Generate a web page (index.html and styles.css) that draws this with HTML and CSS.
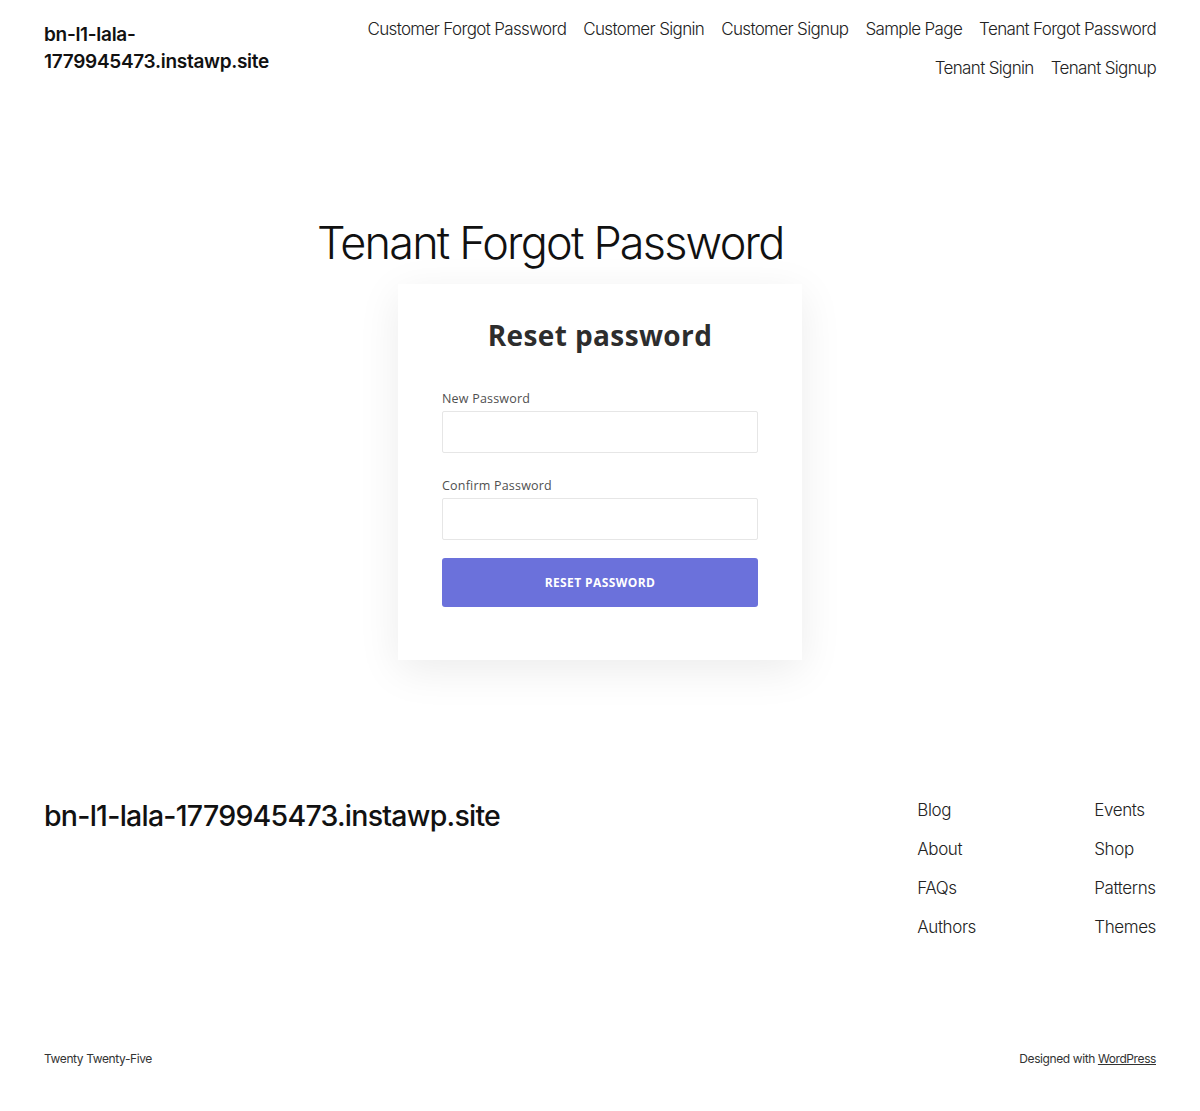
FILE: index.html
```html
<!DOCTYPE html>
<html lang="en">
<head>
<meta charset="utf-8">
<title>Tenant Forgot Password</title>
<link rel="stylesheet" href="styles.css">
</head>
<body>
<header class="site-header">
  <div class="site-title">bn-l1-lala-1779945473.instawp.site</div>
  <nav class="main-nav">
    <a href="#">Customer Forgot Password</a>
    <a href="#">Customer Signin</a>
    <a href="#">Customer Signup</a>
    <a href="#">Sample Page</a>
    <a href="#">Tenant Forgot Password</a>
    <a href="#">Tenant Signin</a>
    <a href="#">Tenant Signup</a>
  </nav>
</header>

<main class="content">
  <h1 class="page-title">Tenant Forgot Password</h1>
  <div class="card">
    <h2 class="card-title">Reset password</h2>
    <form class="form">
      <label class="field field-first">
        <span class="field-label">New Password</span>
        <input class="field-input" type="password">
      </label>
      <label class="field">
        <span class="field-label">Confirm Password</span>
        <input class="field-input" type="password">
      </label>
      <button class="btn" type="button">RESET PASSWORD</button>
    </form>
  </div>
</main>

<footer class="site-footer">
  <div class="footer-top">
    <div class="footer-title">bn-l1-lala-1779945473.instawp.site</div>
    <div class="footer-navs">
      <nav class="footer-col">
        <a href="#">Blog</a>
        <a href="#">About</a>
        <a href="#">FAQs</a>
        <a href="#">Authors</a>
      </nav>
      <nav class="footer-col">
        <a href="#">Events</a>
        <a href="#">Shop</a>
        <a href="#">Patterns</a>
        <a href="#">Themes</a>
      </nav>
    </div>
  </div>
  <div class="footer-bottom">
    <span>Twenty Twenty-Five</span>
    <span>Designed with <a href="#" class="wp-link">WordPress</a></span>
  </div>
</footer>
</body>
</html>
```

FILE: styles.css
```css
* { box-sizing: border-box; }

body {
  margin: 0;
  background: #fff;
  color: #111;
  font-family: Inter, "Noto Sans", sans-serif;
}

a { color: inherit; text-decoration: none; }

.site-header {
  display: flex;
  justify-content: space-between;
  align-items: flex-start;
  padding: 17px 44px 0;
}

.site-title {
  width: 240px;
  font-size: 19px;
  font-weight: 600;
  line-height: 27px;
  letter-spacing: -0.3px;
  word-break: break-word;
  padding-top: 4px;
}

.main-nav {
  display: flex;
  flex-wrap: wrap;
  justify-content: flex-end;
  column-gap: 17px;
  row-gap: 15px;
  max-width: 800px;
  font-size: 17px;
  font-weight: 300;
  line-height: 24px;
  letter-spacing: -0.65px;
  color: #222;
}

.content {
  width: 566px;
  margin: 0 auto;
  padding-top: 135px;
  padding-bottom: 129px;
}

.page-title {
  margin: 0;
  font-size: 45px;
  font-weight: 300;
  line-height: 56px;
  letter-spacing: -1.8px;
  color: #111;
}

.card {
  width: 404px;
  margin: 13px auto 0;
  background: #fff;
  padding: 32px 44px 53px;
  box-shadow: 0 10px 40px rgba(0,0,0,0.08);
  font-family: "Open Sans", sans-serif;
}

.card-title {
  margin: 0 0 37px;
  text-align: center;
  font-size: 28px;
  font-weight: 700;
  line-height: 38px;
  color: #2d2d2d;
  letter-spacing: 0.4px;
}

.form {
  display: flex;
  flex-direction: column;
}

.field {
  display: flex;
  flex-direction: column;
  margin-bottom: 18px;
}

.field-first { margin-bottom: 25px; }

.field-label {
  font-size: 12.5px;
  color: #505050;
  line-height: 16px;
  margin-bottom: 4px;
  letter-spacing: 0.2px;
}

.field-input {
  height: 42px;
  border: 1px solid #e6e6e6;
  border-radius: 2px;
  background: #fff;
  outline: none;
}

.btn {
  height: 49px;
  border: none;
  border-radius: 3px;
  background: #6b71db;
  color: #fff;
  font-family: "Open Sans", sans-serif;
  font-weight: 700;
  font-size: 12px;
  letter-spacing: 0.4px;
}

.site-footer {
  padding: 0 44px;
}

.footer-top {
  display: flex;
  justify-content: space-between;
  align-items: flex-start;
  padding-top: 9px;
  height: 262px;
}

.footer-title {
  font-size: 28.5px;
  font-weight: 500;
  letter-spacing: -0.75px;
  line-height: 36px;
}

.footer-navs {
  display: flex;
}

.footer-col {
  display: flex;
  flex-direction: column;
  row-gap: 15px;
  width: 177px;
  font-size: 17px;
  font-weight: 300;
  line-height: 24px;
  letter-spacing: -0.4px;
  color: #222;
}

.footer-col:last-child { width: auto; }

.footer-bottom {
  display: flex;
  justify-content: space-between;
  font-size: 12px;
  letter-spacing: -0.4px;
  color: #333;
  padding-bottom: 40px;
}

.wp-link { text-decoration: underline; }
```
